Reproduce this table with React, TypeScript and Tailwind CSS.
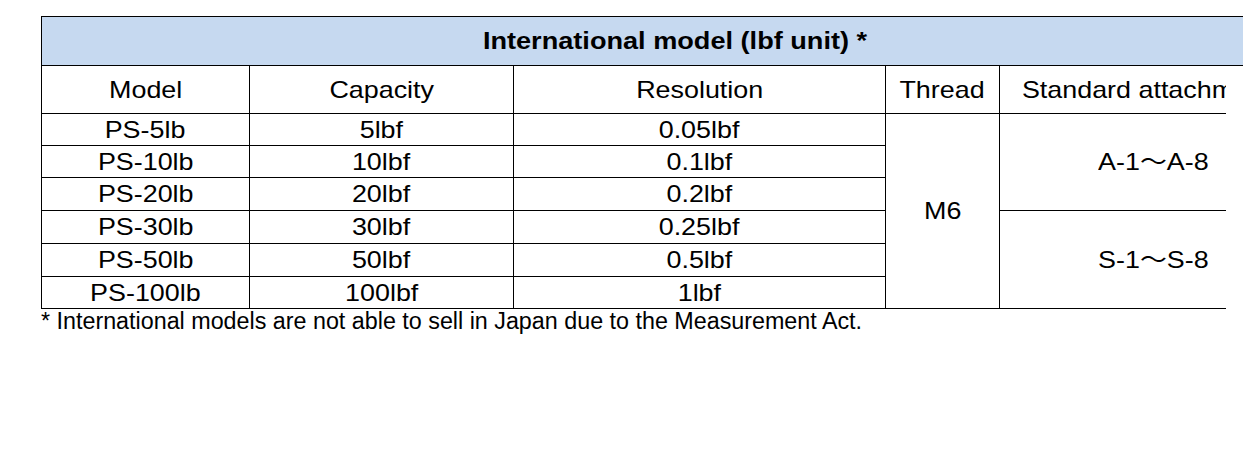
import React from 'react';

const rows = [
  { model: 'PS-5lb', capacity: '5lbf', resolution: '0.05lbf', row: 'row-start-2' },
  { model: 'PS-10lb', capacity: '10lbf', resolution: '0.1lbf', row: 'row-start-3' },
  { model: 'PS-20lb', capacity: '20lbf', resolution: '0.2lbf', row: 'row-start-4' },
  { model: 'PS-30lb', capacity: '30lbf', resolution: '0.25lbf', row: 'row-start-5' },
  { model: 'PS-50lb', capacity: '50lbf', resolution: '0.5lbf', row: 'row-start-6' },
  { model: 'PS-100lb', capacity: '100lbf', resolution: '1lbf', row: 'row-start-7' },
];

// text in the screenshot is stretched sideways a bit
const Txt = ({ children }: { children: React.ReactNode }) => (
  <span className="inline-block scale-x-[1.12] whitespace-nowrap">{children}</span>
);

const cell = 'flex items-center justify-center border-r border-b border-black';

const App: React.FC = () => {
  return (
    <div className="w-[1243px] h-[456px] overflow-hidden bg-white pt-[16px] pl-[41px] text-black text-[24px] font-['Liberation_Sans','Noto_Sans_CJK_JP',Arial,sans-serif]">
      <div className="w-[1266px]">
        <div className="h-[50px] border-y border-l border-black bg-[#c6d9f0] flex items-center justify-center">
          <span className="inline-block scale-x-[1.13] font-bold whitespace-nowrap">International model (lbf unit) *</span>
        </div>

        <div className="w-[1185px] overflow-hidden">
          <div className="w-[1266px] grid grid-cols-[208px_264px_372px_114px_308px] grid-rows-[48px_32px_32px_33px_33px_33px_32px] border-l border-black leading-none">
            <div className={cell}><Txt>Model</Txt></div>
            <div className={cell}><Txt>Capacity</Txt></div>
            <div className={cell}><Txt>Resolution</Txt></div>
            <div className={cell}><Txt>Thread</Txt></div>
            <div className={cell}><Txt>Standard attachments</Txt></div>

            {rows.map(r => (
              <React.Fragment key={r.model}>
                <div className={`${cell} col-start-1 ${r.row}`}><Txt>{r.model}</Txt></div>
                <div className={`${cell} col-start-2 ${r.row}`}><Txt>{r.capacity}</Txt></div>
                <div className={`${cell} col-start-3 ${r.row}`}><Txt>{r.resolution}</Txt></div>
              </React.Fragment>
            ))}

            <div className={`${cell} col-start-4 row-start-2 row-end-8`}><Txt>M6</Txt></div>
            <div className={`${cell} col-start-5 row-start-2 row-end-5`}><Txt>A-1～A-8</Txt></div>
            <div className={`${cell} col-start-5 row-start-5 row-end-8`}><Txt>S-1～S-8</Txt></div>
          </div>
        </div>

        <p className="text-[23.3px] leading-[24px] whitespace-nowrap">
          * International models are not able to sell in Japan due to the Measurement Act.
        </p>
      </div>
    </div>
  );
};

export default App;
